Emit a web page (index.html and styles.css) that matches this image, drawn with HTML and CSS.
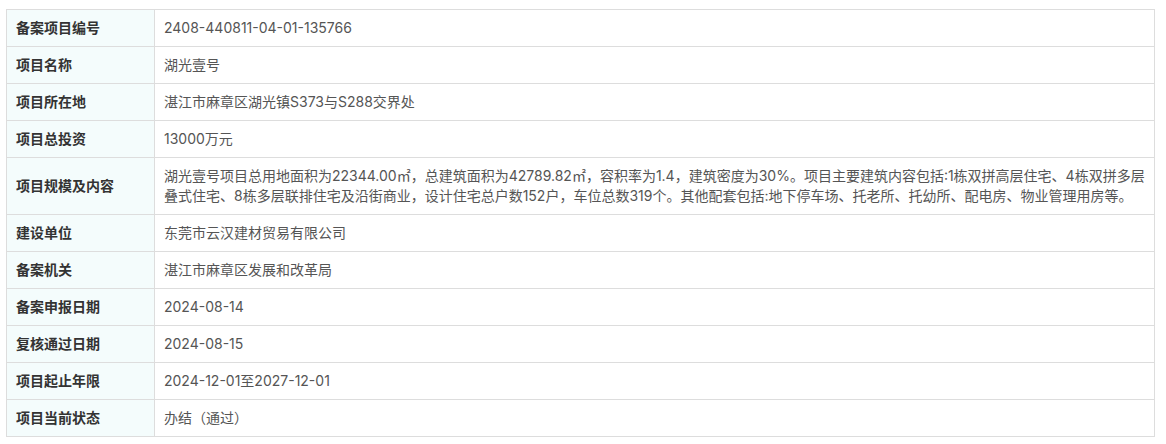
FILE: index.html
```html
<!DOCTYPE html>
<html lang="zh-CN">
<head>
<meta charset="utf-8">
<title>项目备案信息</title>
<link rel="stylesheet" href="styles.css">
</head>
<body>
<div class="wrap">
<table class="info">
  <tr><th>备案项目编号</th><td>2408-440811-04-01-135766</td></tr>
  <tr><th>项目名称</th><td>湖光壹号</td></tr>
  <tr><th>项目所在地</th><td>湛江市麻章区湖光镇S373与S288交界处</td></tr>
  <tr><th>项目总投资</th><td>13000万元</td></tr>
  <tr><th>项目规模及内容</th><td>湖光壹号项目总用地面积为22344.00㎡，总建筑面积为42789.82㎡，容积率为1.4，建筑密度为30%。项目主要建筑内容包括:1栋双拼高层住宅、4栋双拼多层叠式住宅、8栋多层联排住宅及沿街商业，设计住宅总户数152户，车位总数319个。其他配套包括:地下停车场、托老所、托幼所、配电房、物业管理用房等。</td></tr>
  <tr><th>建设单位</th><td>东莞市云汉建材贸易有限公司</td></tr>
  <tr><th>备案机关</th><td>湛江市麻章区发展和改革局</td></tr>
  <tr><th>备案申报日期</th><td>2024-08-14</td></tr>
  <tr><th>复核通过日期</th><td>2024-08-15</td></tr>
  <tr><th>项目起止年限</th><td>2024-12-01至2027-12-01</td></tr>
  <tr><th>项目当前状态</th><td>办结（通过）</td></tr>
</table>
</div>
</body>
</html>
```

FILE: styles.css
```css
html, body {
  margin: 0;
  padding: 0;
  background: #fff;
}
.wrap {
  padding: 9px 0 0 6px;
}
.info {
  width: 1149px;
  border-collapse: collapse;
  font-family: "Inter", "Noto Sans CJK SC", sans-serif;
  font-size: 14px;
  line-height: 20px;
}
.info th,
.info td {
  border: 1px solid #dddddd;
  padding: 8px 10px 8px 9px;
  text-align: left;
  vertical-align: middle;
}
.info th {
  width: 128px;
  background: #f4fcfc;
  color: #333;
  font-weight: bold;
}
.info td {
  padding-right: 3px;
  color: #555;
  font-weight: normal;
}
```
